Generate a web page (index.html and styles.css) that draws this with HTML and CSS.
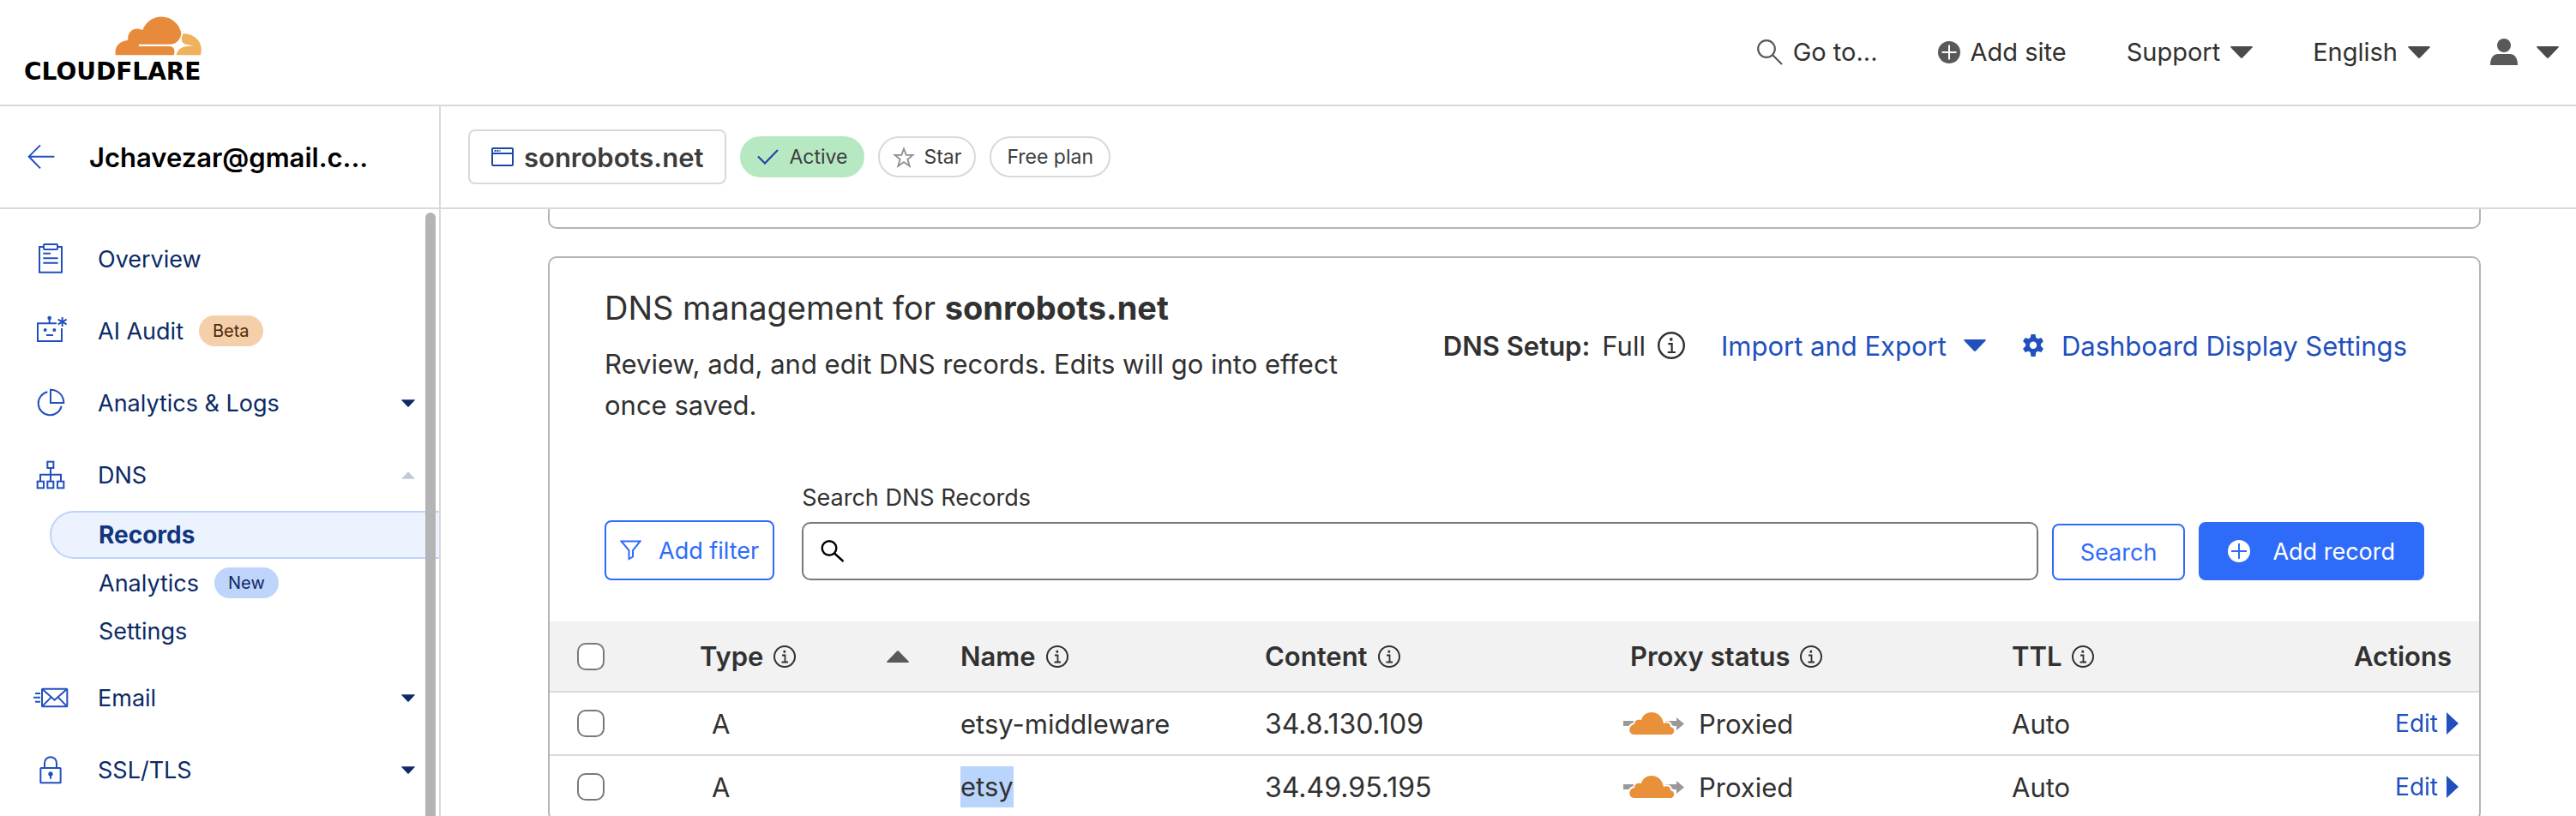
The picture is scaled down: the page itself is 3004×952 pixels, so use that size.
FILE: index.html
```html
<!DOCTYPE html>
<html lang="en">
<head>
<meta charset="utf-8">
<title>DNS records | sonrobots.net | Cloudflare</title>
<link rel="stylesheet" href="styles.css">
</head>
<body>
<svg class="sprite" aria-hidden="true">
  <symbol id="info" viewBox="0 0 26 26"><g fill="none" stroke="currentColor" stroke-width="2"><circle cx="13" cy="13" r="12"/><path d="M10 11.500h3.500V19M9.500 19.500h7.500" stroke-width="1.800"/></g><rect x="11.500" y="5.800" width="2.600" height="2.800" fill="currentColor"/></symbol>
  <symbol id="down" viewBox="0 0 26 14"><path d="M1 0h24q1.400.2.500 1.400L14 13.400q-1 .9-2 0L.5 1.400Q-.4.200 1 0z" fill="currentColor"/></symbol>
  <symbol id="proxy" viewBox="0 0 72 28"><path d="M0 11h62V7l9 7.500-9 7.500v-5H0z" fill="#999"/><path d="M12 27c-8-1-7-12 1-13-1-5 3-7 7-5C23-2 44-4 48 13c5-2 8 1 8 4 7 1 6 9 1 10z" fill="#fff" stroke="#fff" stroke-width="2"/><path d="M12 27c-7-1-6-11 1-12 0-5 4-6 8-5C24-2 44-3 47 14c5-2 8 0 8 4 6 1 5 8 1 9z" fill="#e8903a"/></symbol>
</svg>
<div class="app">
  <header class="topbar">
    <a class="logo" href="#" aria-label="Cloudflare home">
      <svg class="logo-cloud" viewBox="411 62 304 138"><path fill="#e88a3c" d="M413 198c-4-28 12-50 44-52-4-32 24-50 51-36 12-30 38-47 66-47 36 0 64 26 70 58-3 22-16 37-36 39H495v7h108c14 1 21 12 15 31z"/><path fill="#f0b15b" d="M650 123c42-1 68 32 64 60l-2 15h-86c5-17 16-28 34-30l27-3-28-5c-14-4-18-16-9-37z"/></svg>
      <span class="wordmark">CLOUDFLARE</span>
    </a>
    <nav class="topnav">
      <button class="topitem"><svg class="i-search" viewBox="0 0 30 30" fill="none" stroke="#595959" stroke-width="2.200"><circle cx="11" cy="11" r="9.800"/><path d="M18 18l11 11"/></svg>Go to...</button>
      <button class="topitem"><svg class="i-plus" viewBox="0 0 26 26"><circle cx="13" cy="13" r="13" fill="#595959"/><path d="M13 4.500v17M4.500 13h17" stroke="#fff" stroke-width="2"/></svg>Add site</button>
      <button class="topitem">Support<svg class="caret"><use href="#down"/></svg></button>
      <button class="topitem">English<svg class="caret"><use href="#down"/></svg></button>
      <button class="topitem user" aria-label="Account"><svg class="i-user" viewBox="0 0 32 32" fill="#595959"><circle cx="16" cy="8" r="8"/><path d="M0 31C0 22 4 18 9 18h14c5 0 9 4 9 13z"/></svg><svg class="caret"><use href="#down"/></svg></button>
    </nav>
  </header>
  <div class="body">
    <aside class="sidebar">
      <div class="account"><a href="#" aria-label="Back"><svg class="i-back" viewBox="98 504 96 90" fill="none" stroke="#2150be" stroke-width="6"><path d="M192 548H103M143 508l-40 40 40 41"/></svg></a><strong class="account-name">Jchavezar@gmail.c...</strong></div>
      <nav class="menu">
        <a class="item" href="#"><svg class="icon" viewBox="114 123 126 126"><path d="M152 144h-14v89h78v-89h-14M151 167h26M151 184h52M151 200h52"/><rect x="153" y="135" width="48" height="18" rx="3"/></svg>Overview</a>
        <a class="item" href="#"><svg class="icon" viewBox="114 375 126 126"><path d="M198 412h-66v62h84v-45M173 412v-14M162 453h24M218 390v33M203 398l30 17M233 398l-30 17"/><g class="solid"><circle cx="173" cy="393" r="7"/><circle cx="158" cy="435" r="6"/><circle cx="190" cy="435" r="6"/></g></svg>AI Audit<span class="badge beta">Beta</span></a>
        <a class="item" href="#"><svg class="icon" viewBox="114 627 126 126"><path d="M166 652a41 41 0 1 0 49 49M177 644v46h46c0-26-20-46-46-46z"/></svg>Analytics &amp; Logs<svg class="caret small"><use href="#down"/></svg></a>
        <a class="item" href="#"><svg class="icon" viewBox="114 879 126 126"><path d="M177 919v45M141 964v-23h72v23"/><rect x="166" y="896" width="21" height="22"/><rect x="131" y="965" width="22" height="23"/><rect x="166" y="965" width="21" height="23"/><rect x="201" y="965" width="22" height="23"/></svg>DNS<svg class="caret small open" viewBox="0 0 26 14"><path d="M0 14h26L13 0z" fill="currentColor"/></svg></a>
        <div class="submenu">
          <a class="sub current" href="#">Records</a>
          <a class="sub" href="#">Analytics<span class="badge new">New</span></a>
          <a class="sub" href="#">Settings</a>
        </div>
        <a class="item" href="#"><svg class="icon" viewBox="114 609 126 126"><rect x="147" y="641" width="88" height="62" rx="2"/><path d="M149 643l42 37 42-37M149 701l30-31M233 701l-30-31M123 657h18M117 671h24M123 686h18"/></svg>Email<svg class="caret small"><use href="#down"/></svg></a>
        <a class="item" href="#"><svg class="icon" viewBox="114 861 126 126"><rect x="142" y="918" width="70" height="52" rx="2"/><path d="M156 917v-15c0-30 42-30 42 0v15M177 942v14"/><circle class="solid" cx="177" cy="939" r="8"/></svg>SSL/TLS<svg class="caret small"><use href="#down"/></svg></a>
      </nav>
      <div class="thumb"></div>
    </aside>
    <main class="main">
      <div class="zonebar">
        <button class="zone"><svg class="i-window" viewBox="0 0 26 22" fill="none" stroke="#1d47a5" stroke-width="2"><rect x="1" y="1" width="24" height="20" rx="1"/><path d="M1 7h24"/><path d="M3.500 4h7" stroke-dasharray="2 1"/></svg>sonrobots.net</button>
        <span class="pill active"><svg class="i-check" viewBox="0 0 25 18" fill="none" stroke="#1d47a5" stroke-width="2.200"><path d="M1 8.500l8 8L24 1"/></svg>Active</span>
        <button class="pill star"><svg class="i-star" viewBox="0 0 26 25" fill="none" stroke="#8e8e8e" stroke-width="1.800"><path d="M13 2.500l2.700 7.300h8l-6.300 5 2.300 8L13 18l-6.700 4.800 2.300-8-6.300-5h8z"/></svg>Star</button>
        <span class="pill">Free plan</span>
      </div>
      <div class="content">
        <section class="card previous"></section>
        <section class="card">
          <div class="head">
            <div class="intro">
              <h1 class="title">DNS management for <strong>sonrobots.net</strong></h1>
              <p class="desc">Review, add, and edit DNS records. Edits will go into effect once saved.</p>
            </div>
            <div class="tools">
              <span class="setup"><strong>DNS Setup:</strong><span>Full</span><svg class="info large"><use href="#info"/></svg></span>
              <button class="link">Import and Export<svg class="caret"><use href="#down"/></svg></button>
              <button class="link"><svg class="i-gear" viewBox="0 0 26 26"><path fill="#2150be" fill-rule="evenodd" d="M10.500 0h5l.8 4 2.200 1.200L22.400 4l2.500 4.300-3 2.900v2.600l3 2.900-2.500 4.300-3.900-1.200-2.200 1.200-.8 5h-5l-.8-5-2.200-1.200L3.600 21l-2.500-4.300 3-2.900v-2.600l-3-2.900L3.600 4l3.900 1.200L9.700 4zM13 8.500a4.200 4.200 0 1 0 0 8.400 4.200 4.200 0 0 0 0-8.400z"/></svg>Dashboard Display Settings</button>
            </div>
          </div>
          <form class="toolbar">
            <button type="button" class="btn filter"><svg class="i-filter" viewBox="0 0 25 24" fill="none" stroke="#2f6bf9" stroke-width="2"><path d="M1.500 1.500h22L15 12v7.500L10.500 22V12z"/></svg>Add filter</button>
            <div class="field">
              <label class="label" for="q">Search DNS Records</label>
              <div class="box"><svg class="i-find" viewBox="0 0 28 26" fill="none" stroke="#000" stroke-width="2.400"><circle cx="10" cy="9.500" r="8.300"/><path d="M16 15.500l10.500 9.500"/></svg><input class="input" id="q" type="text"></div>
            </div>
            <button type="button" class="btn search">Search</button>
            <button type="button" class="btn primary"><svg class="i-plus" viewBox="0 0 26 26"><circle cx="13" cy="13" r="13" fill="#fff"/><path d="M13 4v18M4 13h18" stroke="#2f6bf9" stroke-width="2"/></svg>Add record</button>
          </form>
          <table class="records">
            <colgroup><col class="c-check"><col class="c-type"><col class="c-name"><col class="c-content"><col class="c-proxy"><col class="c-ttl"><col class="c-actions"></colgroup>
            <thead><tr>
              <th class="check"><input type="checkbox" class="tick" aria-label="Select all"></th>
              <th><span class="sortable"><span class="th">Type<svg class="info"><use href="#info"/></svg></span><svg class="sort" viewBox="0 0 26 14"><path d="M1 14h24q1.400-.2.500-1.400L14 .6q-1-.9-2 0L.5 12.600Q-.4 13.800 1 14z" fill="#595959"/></svg></span></th>
              <th><span class="th">Name<svg class="info"><use href="#info"/></svg></span></th>
              <th><span class="th">Content<svg class="info"><use href="#info"/></svg></span></th>
              <th class="proxy"><span class="th">Proxy status<svg class="info"><use href="#info"/></svg></span></th>
              <th><span class="th">TTL<svg class="info"><use href="#info"/></svg></span></th>
              <th class="actions">Actions</th>
            </tr></thead>
            <tbody>
              <tr><td class="check"><input type="checkbox" class="tick" aria-label="Select etsy-middleware"></td><td class="type">A</td><td>etsy-middleware</td><td class="address">34.8.130.109</td><td><span class="status"><svg class="i-proxy"><use href="#proxy"/></svg>Proxied</span></td><td>Auto</td><td class="edit"><button class="link edit-link">Edit<svg class="play" viewBox="0 0 14 26"><path d="M0 0l14 13L0 26z" fill="#2150be"/></svg></button></td></tr>
              <tr><td class="check"><input type="checkbox" class="tick" aria-label="Select etsy"></td><td class="type">A</td><td><mark class="mark">etsy</mark></td><td class="address">34.49.95.195</td><td><span class="status"><svg class="i-proxy"><use href="#proxy"/></svg>Proxied</span></td><td>Auto</td><td class="edit"><button class="link edit-link">Edit<svg class="play" viewBox="0 0 14 26"><path d="M0 0l14 13L0 26z" fill="#2150be"/></svg></button></td></tr>
            </tbody>
          </table>
        </section>
      </div>
    </main>
  </div>
</div>
</body>
</html>
```
FILE: styles.css
```css
* { box-sizing: border-box; }
body { margin: 0; font-family: Inter, "Liberation Sans", sans-serif; color: #313131; background: #fff; }
button { margin: 0; padding: 0; border: 0; background: none; font: inherit; color: inherit; cursor: pointer; }
a { color: inherit; text-decoration: none; }
svg { flex: none; display: block; }
.sprite { position: absolute; width: 0; height: 0; }

.app { height: 100vh; display: flex; flex-direction: column; overflow: hidden; }
.topbar { display: flex; justify-content: space-between; align-items: center; height: 124px; flex: none; padding: 0 20px 0 28px; border-bottom: 2px solid #d9d9d9; }
.logo { display: flex; flex-direction: column; align-items: flex-end; gap: 6px; padding-bottom: 6px; }
.logo-cloud { width: 101px; height: 46px; }
.wordmark { font-family: "DejaVu Sans", Inter, sans-serif; font-size: 28px; line-height: 26px; font-weight: 700; color: #000; }
.topnav { display: flex; gap: 70px; }
.topitem { display: flex; align-items: center; gap: 12px; font-size: 29px; line-height: 40px; }
.i-search { width: 30px; height: 30px; }
.i-plus { width: 26px; height: 26px; }
.i-user { width: 32px; height: 32px; }
.user { gap: 22px; }
.caret { width: 26px; height: 14px; color: #4a4a4a; }

.body { display: flex; flex: 1; min-height: 0; }
.sidebar { position: relative; width: 514px; flex: none; border-right: 2px solid #d9d9d9; }
.account { display: flex; align-items: center; gap: 40px; height: 120px; padding-left: 32px; border-bottom: 2px solid #d9d9d9; }
.i-back { width: 32px; height: 30px; }
.account-name { font-size: 31px; font-weight: 600; color: #000; }
.menu { padding-top: 16px; color: #0b2a66; font-size: 27px; }
.item { display: flex; align-items: center; height: 84px; padding: 0 28px 0 38px; }
.icon { width: 42px; height: 42px; margin-right: 34px; fill: none; stroke: #2150be; stroke-width: 6; }
.solid { fill: #2150be; stroke: none; }
.caret.small { width: 16px; height: 9px; margin-left: auto; color: #0b2a66; }
.caret.open { color: #c2cad8; }
.submenu { margin: 0 0 8px 58px; }
.sub { display: flex; align-items: center; height: 56px; padding-left: 57px; }
.current { padding-left: 55px; border: 2px solid #bdd3fb; border-right: 0; border-radius: 28px 0 0 28px; background: #ecf3fe; font-size: 28px; font-weight: 700; color: #12367e; }
.badge { margin-left: 18px; padding: 0 16px; border-radius: 18px; font-size: 20px; line-height: 36px; }
.beta { background: #f5cfaa; color: #4d2a0b; }
.new { background: #bfd4fb; color: #0b2a66; }
.thumb { position: absolute; top: 124px; right: 4px; bottom: -20px; width: 12px; border-radius: 6px; background: #b4b4b4; }

.main { flex: 1; min-width: 0; }
.zonebar { display: flex; align-items: center; gap: 16px; height: 120px; padding-left: 32px; border-bottom: 2px solid #d9d9d9; }
.zone { display: flex; align-items: center; gap: 12px; height: 64px; padding: 0 25px; border: 2px solid #d9d9d9; border-radius: 8px; font-size: 31px; font-weight: 600; color: #3c3c3c; }
.i-window { width: 26px; height: 22px; }
.pill { display: flex; align-items: center; gap: 12px; height: 48px; padding: 0 18px; border: 2px solid #d9d9d9; border-radius: 24px; font-size: 23px; color: #3c3c3c; }
.active { border-color: #b6e8c2; background: #b6e8c2; }
.star { padding: 0 15px; gap: 10px; }
.i-check { width: 25px; height: 18px; }
.i-star { width: 26px; height: 25px; }

.content { padding: 0 111px 0 125px; }
.card { border: 2px solid #b4b4b4; border-radius: 10px; }
.previous { height: 23px; margin-bottom: 32px; border-top: 0; border-radius: 0 0 10px 10px; }
.head { display: flex; justify-content: space-between; align-items: center; padding: 32px 84px 0 64px; }
.intro { width: 864px; }
.title { margin: 0 0 16px; font-size: 38px; line-height: 52px; font-weight: 400; }
.title strong { font-weight: 700; }
.desc { margin: 0; font-size: 31px; line-height: 48px; }
.tools { display: flex; align-items: center; gap: 42px; padding-bottom: 24px; font-size: 31px; }
.setup { display: flex; align-items: center; gap: 14px; }
.setup strong { font-weight: 600; }
.info { width: 26px; height: 26px; }
.info.large { width: 32px; height: 32px; }
.link { display: flex; align-items: center; gap: 20px; color: #2150be; }
.link .caret { color: #2150be; }
.i-gear { width: 26px; height: 26px; }

.toolbar { display: flex; align-items: flex-end; gap: 16px; padding: 64px 64px 48px; }
.btn { display: flex; align-items: center; justify-content: center; height: 68px; border: 2px solid #2f6bf9; border-radius: 8px; font-size: 27px; color: #2f6bf9; white-space: nowrap; }
.filter { height: 70px; gap: 20px; padding: 0 16px; margin-right: 16px; }
.i-filter { width: 25px; height: 24px; }
.field { flex: 1; }
.label { display: block; margin-bottom: 8px; font-size: 27px; line-height: 40px; }
.box { display: flex; align-items: center; height: 68px; padding: 0 20px; gap: 12px; border: 2px solid #797979; border-radius: 10px; }
.i-find { width: 28px; height: 26px; }
.input { flex: 1; min-width: 0; border: 0; outline: 0; background: none; font: inherit; font-size: 28px; }
.search { height: 66px; padding: 0 31px; }
.primary { gap: 26px; padding: 0 32px; background: #2f6bf9; color: #fff; }

.records { width: 100%; table-layout: fixed; border-collapse: collapse; font-size: 31px; }
.c-check { width: 175px; }
.c-type { width: 304px; }
.c-content { width: 418px; }
.c-proxy { width: 453px; }
.c-ttl { width: 300px; }
.c-actions { width: 245px; }
.records th, .records td { height: 74px; padding: 0; border-bottom: 2px solid #d9d9d9; text-align: left; }
.records th { height: 82px; background: #f2f2f2; font-weight: 600; }
.records .check { padding-left: 32px; }
.tick { appearance: none; display: block; width: 32px; height: 32px; margin: 0; border: 2px solid #797979; border-radius: 10px; background: #fff; }
.th { display: flex; align-items: center; gap: 12px; }
.sortable { display: flex; align-items: center; justify-content: space-between; padding-right: 60px; }
.sort { width: 26px; height: 14px; }
.records .proxy { padding-left: 8px; }
.records .type { padding-left: 14px; }
.records .address { font-size: 32px; }
.records .actions { padding-right: 32px; text-align: right; }
.status { display: flex; align-items: center; gap: 16px; }
.i-proxy { width: 72px; height: 28px; }
.mark { display: inline-block; line-height: 48px; background: #bad5fb; color: inherit; }
.edit-link { margin-left: auto; margin-right: 24px; gap: 10px; font-size: 28px; }
.play { width: 14px; height: 26px; }
```
